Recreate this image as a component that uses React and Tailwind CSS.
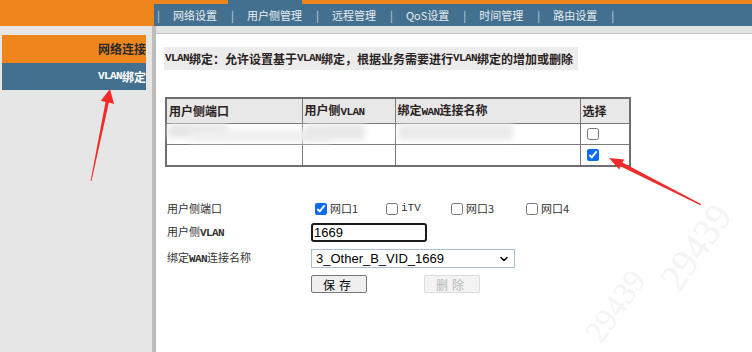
import { ChevronDown } from 'lucide-react';

const navItems = ['网络设置', '用户侧管理', '远程管理', 'QoS设置', '时间管理', '路由设置'];

// Latin letters inside the bold SimSun-style text are half width
function L({ children }) {
  return <span className="text-[11px] font-bold tracking-[-0.6px]" style={{ fontFamily: '"Liberation Mono", monospace' }}>{children}</span>;
}

function Box({ checked }) {
  return (
    <input
      type="checkbox"
      defaultChecked={checked}
      className="m-0 h-[12px] w-[12px] accent-[#0a6cf5]"
    />
  );
}

function Arrows() {
  return (
    <svg className="pointer-events-none absolute left-0 top-0" width="752" height="352">
      <polygon
        fill="#f42a2a"
        points="110,89 114,104 108.9,102.6 91.5,181 90.6,181 105.5,102 100.8,100.8"
      />
      <polygon
        fill="#f42a2a"
        points="609,158 624.4,159.5 622.4,162.6 701,204 700.4,205.2 620.4,166.3 619.2,169.6"
      />
    </svg>
  );
}

export default function App() {
  return (
    <div
      className="relative h-[352px] w-[752px] overflow-hidden bg-white"
      style={{ fontFamily: '"Noto Sans CJK SC", "Liberation Sans", sans-serif' }}
    >
      {/* top bar */}
      <div className="flex h-[26px]">
        <div className="w-[154px] bg-[#ef861d]" />
        <div className="flex flex-1 flex-col">
          <div className="flex h-[4px] bg-[#ef861d]">
            <div className="w-[74px]" />
            <div className="w-[74px] bg-[#44708f]" />
          </div>
          <div className="flex flex-1 items-center gap-[13px] bg-[#44708f] pl-[3px] text-[11px] text-[#e6edf2]">
            <span className="text-[#c9d6e0]">|</span>
            {navItems.map((item) => (
              <div key={item} className="flex items-center gap-[14px]">
                <span>{item}</span>
                <span className="text-[#c9d6e0]">|</span>
              </div>
            ))}
          </div>
        </div>
      </div>

      {/* body */}
      <div className="flex h-[326px]">
        <aside className="w-[152px] bg-[#e6e6e6] pl-[2px] pt-[9px]">
          <div className="flex h-[28px] w-[144px] items-center justify-end overflow-hidden whitespace-nowrap bg-[#ef861d] text-[12px] font-bold text-[#2a2a2a]">
            网络连接
          </div>
          <div className="flex h-[27px] w-[144px] items-center justify-end overflow-hidden whitespace-nowrap bg-[#44708f] text-[12px] font-bold text-white">
            <L>VLAN</L>绑定
          </div>
        </aside>
        <div className="w-[4px] bg-[#bdbdbd]" />

        <main className="flex flex-1 flex-col">
          <div className="h-[8px] border-b border-[#c4c4c4] bg-[#e3e3e3]" />

          <div className="pl-[8px] pt-[13px]">
            <div className="flex h-[23px] w-[414px] items-center whitespace-nowrap bg-[#ececec] pl-[1px] text-[12px] font-bold text-[#2b2222]">
              <L>VLAN</L>绑定：允许设置基于<L>VLAN</L>绑定，根据业务需要进行<L>VLAN</L>绑定的增加或删除
            </div>

            <table className="ml-[1px] mt-[27px] w-[466px] border-collapse border-2 border-[#6e6e6e] text-[12px]">
              <thead>
                <tr className="h-[25px] bg-[#e8e8e8] text-left font-bold text-[#2b2222]">
                  <th className="w-[136px] border border-[#7a7a7a] pl-[2px] font-bold">用户侧端口</th>
                  <th className="w-[93px] border border-[#7a7a7a] pl-[2px] font-bold">用户侧<L>VLAN</L></th>
                  <th className="w-[185px] border border-[#7a7a7a] pl-[2px] font-bold">绑定<L>WAN</L>连接名称</th>
                  <th className="border border-[#7a7a7a] pl-[2px] font-bold">选择</th>
                </tr>
              </thead>
              <tbody>
                <tr className="h-[21px]">
                  <td className="border border-[#7a7a7a]" />
                  <td className="border border-[#7a7a7a]" />
                  <td className="border border-[#7a7a7a]" />
                  <td className="border border-[#7a7a7a] pl-[6px]">
                    <div className="flex items-center"><Box checked={false} /></div>
                  </td>
                </tr>
                <tr className="h-[22px]">
                  <td className="border border-[#7a7a7a]" />
                  <td className="border border-[#7a7a7a]" />
                  <td className="border border-[#7a7a7a]" />
                  <td className="border border-[#7a7a7a] pl-[6px]">
                    <div className="flex items-center"><Box checked /></div>
                  </td>
                </tr>
              </tbody>
            </table>

            {/* form */}
            <div className="ml-[3px] mt-[33px] grid grid-cols-[144px_auto] items-center text-[11px] text-[#333]">
              <span>用户侧端口</span>
              <div className="flex h-[17px] items-center text-[11px]">
                <div className="flex w-[75px] items-center gap-[3px] pl-[4px]"><Box checked />网口1</div>
                <div className="flex w-[65px] items-center gap-[3px]"><Box checked={false} /><span style={{ fontFamily: '"Liberation Mono", monospace' }}>iTV</span></div>
                <div className="flex w-[75px] items-center gap-[3px]"><Box checked={false} />网口3</div>
                <div className="flex items-center gap-[3px]"><Box checked={false} />网口4</div>
              </div>

              <span className="mt-[6px]">用户侧<L>VLAN</L></span>
              <div className="mt-[6px] flex h-[19px] w-[116px] items-center rounded-[3px] border-2 border-[#1c1c1c] pl-[1px] text-[13px] text-black" style={{ fontFamily: '"Liberation Sans", sans-serif' }}>
                1669
              </div>

              <span className="mt-[7px]">绑定<L>WAN</L>连接名称</span>
              <div className="mt-[7px] flex h-[19px] w-[204px] items-center justify-between border border-[#a9bfd6] pl-[4px] pr-[4px] text-[13px] text-black" style={{ fontFamily: '"Liberation Sans", sans-serif' }}>
                <span>3_Other_B_VID_1669</span>
                <ChevronDown size={12} strokeWidth={3} />
              </div>

              <span />
              <div className="mt-[7px] flex items-center gap-[57px]">
                <button className="h-[18px] w-[56px] rounded-[2px] border border-[#767676] bg-[#efefef] text-[12px] tracking-[4px] text-black">
                  保存
                </button>
                <button disabled className="h-[18px] w-[56px] rounded-[2px] border border-[#dcdcdc] bg-[#f3f3f3] text-[12px] tracking-[4px] text-[#b8b8b8]">
                  删除
                </button>
              </div>
            </div>
          </div>
        </main>
      </div>

      {/* pixelated mask over the first table row */}
      <div className="absolute left-[168px] top-[124px] h-[14px] w-[60px] bg-[#e6e6e6] blur-[3px]" />
      <div className="absolute left-[190px] top-[130px] h-[12px] w-[140px] bg-[#efefef] blur-[3px]" />
      <div className="absolute left-[305px] top-[124px] h-[16px] w-[60px] bg-[#e8e8e8] blur-[3px]" />
      <div className="absolute left-[398px] top-[124px] h-[16px] w-[115px] bg-[#eaeaea] blur-[3px]" />

      {/* watermark */}
      <span className="pointer-events-none absolute left-[648px] top-[228px] -rotate-[55deg] text-[38px] leading-none text-[#f4f4f4]" style={{ fontFamily: '"Liberation Serif", serif' }}>29439</span>
      <span className="pointer-events-none absolute left-[575px] top-[290px] -rotate-[55deg] text-[32px] leading-none text-[#f4f4f4]" style={{ fontFamily: '"Liberation Serif", serif' }}>29439</span>

      <Arrows />
    </div>
  );
}
